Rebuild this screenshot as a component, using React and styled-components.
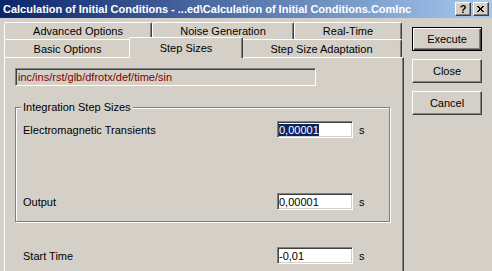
import React from 'react'
import styled, { createGlobalStyle } from 'styled-components'

const GlobalStyle = createGlobalStyle`
  html, body {
    margin: 0;
    padding: 0;
    background: #d4d0c8;
  }
  body {
    font-family: "Liberation Sans", Arial, sans-serif;
    font-size: 11px;
    color: #000;
  }
`

const Window = styled.div`
  width: 492px;
  height: 271px;
  overflow: hidden;
  background: #d4d0c8;
`

const TitleBar = styled.div`
  height: 18px;
  display: flex;
  align-items: center;
  justify-content: space-between;
  padding-left: 3px;
  background: linear-gradient(to right, #0a246a, #a6caf0);
`

const TitleText = styled.div`
  color: #fff;
  font-weight: bold;
  font-size: 11px;
  white-space: nowrap;
`

const CaptionButtons = styled.div`
  display: flex;
  gap: 2px;
  margin-right: 3px;
`

const CaptionButton = styled.div`
  box-sizing: border-box;
  width: 16px;
  height: 14px;
  display: flex;
  align-items: center;
  justify-content: center;
  background: #d4d0c8;
  border-top: 1px solid #fff;
  border-left: 1px solid #fff;
  border-right: 1px solid #404040;
  border-bottom: 1px solid #404040;
  box-shadow: inset -1px -1px 0 #808080;
  font-weight: bold;
  font-size: 11px;
  line-height: 1;
`

const Body = styled.div`
  display: flex;
  padding-left: 4px;
`

const TabArea = styled.div`
  width: 400px;
  margin-top: 4px;
`

const TabRow = styled.div`
  display: flex;
  width: 398px;
  height: ${(p) => p.height}px;
`

const Tab = styled.div`
  box-sizing: border-box;
  width: ${(p) => p.width}px;
  height: ${(p) => (p.selected ? 21 : p.rowHeight)}px;
  margin: ${(p) => (p.selected ? '-2px -2px 0 -2px' : '0')};
  ${(p) => p.selected && 'position: relative; z-index: 2; flex: none;'}
  display: flex;
  align-items: ${(p) => (p.selected ? 'flex-start' : 'center')};
  padding-top: ${(p) => (p.selected ? 4 : 0)}px;
  justify-content: center;
  background: #d4d0c8;
  border-top: 1px solid #fff;
  border-left: 1px solid #fff;
  border-right: 1px solid #404040;
  border-radius: 2px 2px 0 0;
  box-shadow: inset -1px 0 0 #808080;
  white-space: nowrap;
`

const Panel = styled.div`
  box-sizing: border-box;
  width: 400px;
  height: 230px;
  border-top: 1px solid #fff;
  border-left: 1px solid #fff;
  border-right: 1px solid #404040;
  box-shadow: inset -1px 0 0 #808080;
  padding: 10px 0 0 10px;
`

const PathField = styled.div`
  box-sizing: border-box;
  width: 301px;
  height: 18px;
  display: flex;
  align-items: center;
  padding-left: 2px;
  color: #800000;
  border-top: 1px solid #808080;
  border-left: 1px solid #808080;
  border-right: 1px solid #fff;
  border-bottom: 1px solid #fff;
  box-shadow: inset 1px 1px 0 #404040;
`

const GroupBox = styled.div`
  box-sizing: border-box;
  width: 375px;
  margin-top: 21px;
  padding: 0 0 11px 7px;
  border: 1px solid #808080;
  box-shadow: inset 1px 1px 0 #fff, 1px 1px 0 #fff;
`

const GroupLegend = styled.div`
  width: fit-content;
  height: 13px;
  line-height: 13px;
  margin: -7px 0 0 -2px;
  padding: 0 2px;
  background: #d4d0c8;
`

const FieldRow = styled.div`
  display: grid;
  grid-template-columns: 248px 76px auto;
  column-gap: 6px;
  align-items: center;
  margin-top: ${(p) => p.top}px;
  padding-left: ${(p) => p.indent || 0}px;
`

const Input = styled.div`
  box-sizing: border-box;
  height: 17px;
  display: flex;
  align-items: center;
  padding-left: 1px;
  background: #fff;
  border-top: 1px solid #808080;
  border-left: 1px solid #808080;
  border-right: 1px solid #fff;
  border-bottom: 1px solid #fff;
  box-shadow: inset 1px 1px 0 #404040, inset -1px -1px 0 #d4d0c8;
`

const Selected = styled.span`
  background: #0a246a;
  color: #fff;
`

const ButtonColumn = styled.div`
  display: flex;
  flex-direction: column;
  gap: 8px;
  margin: 9px 0 0 8px;
`

const Button = styled.div`
  box-sizing: border-box;
  width: 70px;
  height: 24px;
  display: flex;
  align-items: center;
  justify-content: center;
  background: #d4d0c8;
  border: 1px solid ${(p) => (p.primary ? '#000' : 'transparent')};
  box-shadow: ${(p) =>
    p.primary
      ? 'inset 1px 1px 0 #fff, inset -1px -1px 0 #404040, inset -2px -2px 0 #808080'
      : 'none'};
  ${(p) =>
    !p.primary &&
    `
    border-top-color: #fff;
    border-left-color: #fff;
    border-right-color: #404040;
    border-bottom-color: #404040;
    box-shadow: inset -1px -1px 0 #808080;
  `}
`

const CloseGlyph = () => (
  <svg width="8" height="7" viewBox="0 0 8 7">
    <path d="M0 0L6 6M1 0L7 6M6 0L0 6M7 0L1 6" stroke="#000" strokeWidth="1" />
  </svg>
)

const App = () => (
  <Window>
    <GlobalStyle />
    <TitleBar>
      <TitleText>Calculation of Initial Conditions - ...ed\Calculation of Initial Conditions.ComInc</TitleText>
      <CaptionButtons>
        <CaptionButton>?</CaptionButton>
        <CaptionButton><CloseGlyph /></CaptionButton>
      </CaptionButtons>
    </TitleBar>
    <Body>
      <TabArea>
        <TabRow height={17}>
          <Tab width={148} rowHeight={17}>Advanced Options</Tab>
          <Tab width={142} rowHeight={17}>Noise Generation</Tab>
          <Tab width={108} rowHeight={17}>Real-Time</Tab>
        </TabRow>
        <TabRow height={18}>
          <Tab width={127} rowHeight={18}>Basic Options</Tab>
          <Tab width={114} rowHeight={18} selected>Step Sizes</Tab>
          <Tab width={161} rowHeight={18}>Step Size Adaptation</Tab>
        </TabRow>
        <Panel>
          <PathField>inc/ins/rst/glb/dfrotx/def/time/sin</PathField>
          <GroupBox>
            <GroupLegend>Integration Step Sizes</GroupLegend>
            <FieldRow top={7}>
              <span>Electromagnetic Transients</span>
              <Input><Selected>0,00001</Selected></Input>
              <span>s</span>
            </FieldRow>
            <FieldRow top={55}>
              <span>Output</span>
              <Input>0,00001</Input>
              <span>s</span>
            </FieldRow>
          </GroupBox>
          <FieldRow top={25} indent={8}>
            <span>Start Time</span>
            <Input>-0,01</Input>
            <span>s</span>
          </FieldRow>
        </Panel>
      </TabArea>
      <ButtonColumn>
        <Button primary>Execute</Button>
        <Button>Close</Button>
        <Button>Cancel</Button>
      </ButtonColumn>
    </Body>
  </Window>
)

export default App
